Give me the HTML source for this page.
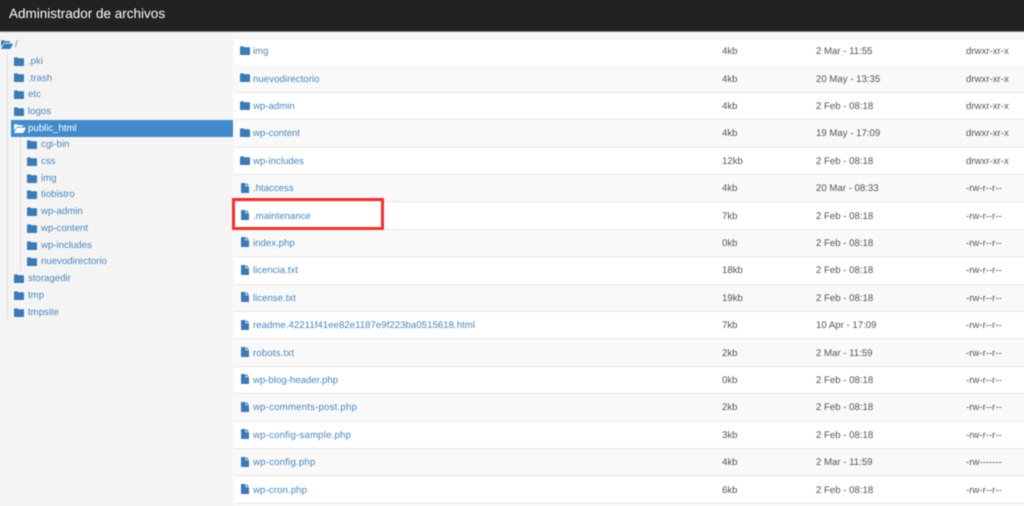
<!DOCTYPE html>
<html lang="es"><head><meta charset="utf-8"><title>Administrador de archivos</title>
<style>
html,body{margin:0;padding:0;width:1024px;height:506px;overflow:hidden;background:#f9f9f9}
#clip{position:relative;width:1024px;height:506px;overflow:hidden;contain:paint}
#w{position:absolute;left:-6px;top:-6px;width:1036px;height:518px;overflow:hidden;font-family:"Liberation Sans",sans-serif;filter:blur(.4px);text-rendering:geometricPrecision}
#in{position:absolute;left:6px;top:6px;width:1024px;height:506px}
#top{position:absolute;left:-6px;top:-6px;width:1036px;height:37px;background:#222;border-bottom:1px solid #777;color:#fff;font-size:13.5px;line-height:40px;text-indent:15px}
#side{position:absolute;left:-6px;top:32px;width:239px;height:480px;background:#f4f4f4}
.l{position:absolute;white-space:nowrap;font-size:9.65px;line-height:14px;color:#4a86bd;margin-top:.7px}
.k{position:absolute;white-space:nowrap;font-size:9.65px;line-height:14px;color:#555;margin-top:1.3px}
.l[style*="left:253px"]{margin-top:1.3px}
.r{position:absolute;left:234px;width:796px;height:26.4px;border-bottom:1px solid #e8e8e8}
svg.i{position:absolute;fill:#3a7ab5}
svg.i[style*="left:240px"]{margin-top:-.7px}
.v{position:absolute;width:1px;background:#ddd}
</style></head><body><div id="clip"><div id="w"><div id="in">
<svg width="0" height="0" style="position:absolute"><defs>
<symbol id="f" viewBox="0 0 10 9"><path d="M0 1.2Q0 .4 .8 .4H3.4L4.2 1.2H9.2Q10 1.2 10 2V8.2Q10 9 9.2 9H.8Q0 9 0 8.2Z"/></symbol>
<symbol id="o" viewBox="0 0 12 9"><path d="M0 1Q0 .3 .7 .3H3.2L4 1.1H8.2Q9 1.1 9 1.8V2.8H3L0 6.5Z"/><path d="M3.4 3.6H11.6Q12 3.6 11.8 4.1L9.5 8.5Q9.3 9 8.7 9H.6Q0 9 .3 8.4L2.6 4.1Q2.9 3.6 3.4 3.6Z"/></symbol>
<symbol id="d" viewBox="0 0 8 10"><path d="M0 .6Q0 0 .6 0H4.4V3.2H8V9.4Q8 10 7.4 10H.6Q0 10 0 9.4Z"/><path d="M5.2 0L8 2.5H5.2Z"/></symbol>
</defs></svg>

<div id="top">Administrador de archivos</div>
<div id="side"></div>
<div style="position:absolute;left:11px;top:120px;width:222px;height:16.5px;background:#428bca"></div>
<div class="v" style="left:7px;top:52px;height:268px"></div>
<div class="v" style="left:20px;top:137px;height:133px"></div>

<svg class="i" style="left:1px;top:39.500px" width="12" height="9"><use href="#o"/></svg><div class="l" style="left:15px;top:37px">/</div>
<svg class="i" style="left:14px;top:56.500px" width="10" height="9"><use href="#f"/></svg><div class="l" style="left:28px;top:54.500px">.pki</div>
<svg class="i" style="left:14px;top:73px" width="10" height="9"><use href="#f"/></svg><div class="l" style="left:28px;top:71px">.trash</div>
<svg class="i" style="left:14px;top:90px" width="10" height="9"><use href="#f"/></svg><div class="l" style="left:28px;top:87.500px">etc</div>
<svg class="i" style="left:14px;top:106.500px" width="10" height="9"><use href="#f"/></svg><div class="l" style="left:28px;top:104px">logos</div>
<svg class="i" style="left:14px;top:123.500px;fill:#fff" width="12" height="9"><use href="#o"/></svg><div class="l" style="left:28px;top:121px;color:#fff">public_html</div>
<svg class="i" style="left:27px;top:140px" width="10" height="9"><use href="#f"/></svg><div class="l" style="left:41px;top:137.500px">cgi-bin</div>
<svg class="i" style="left:27px;top:156.500px" width="10" height="9"><use href="#f"/></svg><div class="l" style="left:41px;top:154px">css</div>
<svg class="i" style="left:27px;top:173.500px" width="10" height="9"><use href="#f"/></svg><div class="l" style="left:41px;top:171px">img</div>
<svg class="i" style="left:27px;top:190px" width="10" height="9"><use href="#f"/></svg><div class="l" style="left:41px;top:187.500px">tiobistro</div>
<svg class="i" style="left:27px;top:207px" width="10" height="9"><use href="#f"/></svg><div class="l" style="left:41px;top:204.500px">wp-admin</div>
<svg class="i" style="left:27px;top:224px" width="10" height="9"><use href="#f"/></svg><div class="l" style="left:41px;top:221px">wp-content</div>
<svg class="i" style="left:27px;top:240.500px" width="10" height="9"><use href="#f"/></svg><div class="l" style="left:41px;top:238px">wp-includes</div>
<svg class="i" style="left:27px;top:257px" width="10" height="9"><use href="#f"/></svg><div class="l" style="left:41px;top:254.500px">nuevodirectorio</div>
<svg class="i" style="left:14px;top:274px" width="10" height="9"><use href="#f"/></svg><div class="l" style="left:28px;top:271.500px">storagedir</div>
<svg class="i" style="left:14px;top:290.500px" width="10" height="9"><use href="#f"/></svg><div class="l" style="left:28px;top:288px">tmp</div>
<svg class="i" style="left:14px;top:307.500px" width="10" height="9"><use href="#f"/></svg><div class="l" style="left:28px;top:305px">tmpsite</div>

<div style="position:absolute;left:233px;top:32px;width:797px;height:6px;background:#f9f9f9"></div>
<div class="r" style="top:38px;background:#fff;border-top:1px solid #eee"></div>
<div class="r" style="top:65.400px;background:#f9f9f9"></div>
<div class="r" style="top:92.800px;background:#fff"></div>
<div class="r" style="top:120.200px;background:#f9f9f9"></div>
<div class="r" style="top:147.600px;background:#fff"></div>
<div class="r" style="top:175px;background:#f9f9f9"></div>
<div class="r" style="top:202.500px;background:#fff"></div>
<div class="r" style="top:229.900px;background:#f9f9f9"></div>
<div class="r" style="top:257.300px;background:#fff"></div>
<div class="r" style="top:284.700px;background:#f9f9f9"></div>
<div class="r" style="top:312.100px;background:#fff"></div>
<div class="r" style="top:339.500px;background:#f9f9f9"></div>
<div class="r" style="top:366.900px;background:#fff"></div>
<div class="r" style="top:394.300px;background:#f9f9f9"></div>
<div class="r" style="top:421.700px;background:#fff"></div>
<div class="r" style="top:449.100px;background:#f9f9f9"></div>
<div class="r" style="top:476.500px;background:#fff"></div>
<div style="position:absolute;left:233px;top:504px;width:797px;height:8px;background:#f9f9f9"></div>

<svg class="i" style="left:240px;top:46.500px" width="10" height="9"><use href="#f"/></svg><div class="l" style="left:253px;top:44px">img</div><div class="k" style="left:722px;top:44px">4kb</div><div class="k" style="left:816px;top:44px">2 Mar - 11:55</div><div class="k" style="left:966px;top:44px">drwxr-xr-x</div>
<svg class="i" style="left:240px;top:74px" width="10" height="9"><use href="#f"/></svg><div class="l" style="left:253px;top:71.400px;letter-spacing:.05px">nuevodirectorio</div><div class="k" style="left:722px;top:71.400px">4kb</div><div class="k" style="left:816px;top:71.400px">20 May - 13:35</div><div class="k" style="left:966px;top:71.400px">drwxr-xr-x</div>
<svg class="i" style="left:240px;top:101.400px" width="10" height="9"><use href="#f"/></svg><div class="l" style="left:253px;top:98.800px">wp-admin</div><div class="k" style="left:722px;top:98.800px">4kb</div><div class="k" style="left:816px;top:98.800px">2 Feb - 08:18</div><div class="k" style="left:966px;top:98.800px">drwxr-xr-x</div>
<svg class="i" style="left:240px;top:128.800px" width="10" height="9"><use href="#f"/></svg><div class="l" style="left:253px;top:126.200px">wp-content</div><div class="k" style="left:722px;top:126.200px">4kb</div><div class="k" style="left:816px;top:126.200px">19 May - 17:09</div><div class="k" style="left:966px;top:126.200px">drwxr-xr-x</div>
<svg class="i" style="left:240px;top:156.200px" width="10" height="9"><use href="#f"/></svg><div class="l" style="left:253px;top:153.600px">wp-includes</div><div class="k" style="left:722px;top:153.600px">12kb</div><div class="k" style="left:816px;top:153.600px">2 Feb - 08:18</div><div class="k" style="left:966px;top:153.600px">drwxr-xr-x</div>
<svg class="i" style="left:241px;top:182.500px" width="8" height="10"><use href="#d"/></svg><div class="l" style="left:253px;top:181px">.htaccess</div><div class="k" style="left:722px;top:181px">4kb</div><div class="k" style="left:816px;top:181px">20 Mar - 08:33</div><div class="k" style="left:966px;top:181px">-rw-r--r--</div>
<svg class="i" style="left:241px;top:209.900px" width="8" height="10"><use href="#d"/></svg><div class="l" style="left:253px;top:208.400px">.maintenance</div><div class="k" style="left:722px;top:208.400px">7kb</div><div class="k" style="left:816px;top:208.400px">2 Feb - 08:18</div><div class="k" style="left:966px;top:208.400px">-rw-r--r--</div>
<svg class="i" style="left:241px;top:237.300px" width="8" height="10"><use href="#d"/></svg><div class="l" style="left:253px;top:235.800px">index.php</div><div class="k" style="left:722px;top:235.800px">0kb</div><div class="k" style="left:816px;top:235.800px">2 Feb - 08:18</div><div class="k" style="left:966px;top:235.800px">-rw-r--r--</div>
<svg class="i" style="left:241px;top:264.700px" width="8" height="10"><use href="#d"/></svg><div class="l" style="left:253px;top:263.200px">licencia.txt</div><div class="k" style="left:722px;top:263.200px">18kb</div><div class="k" style="left:816px;top:263.200px">2 Feb - 08:18</div><div class="k" style="left:966px;top:263.200px">-rw-r--r--</div>
<svg class="i" style="left:241px;top:292.100px" width="8" height="10"><use href="#d"/></svg><div class="l" style="left:253px;top:290.600px">license.txt</div><div class="k" style="left:722px;top:290.600px">19kb</div><div class="k" style="left:816px;top:290.600px">2 Feb - 08:18</div><div class="k" style="left:966px;top:290.600px">-rw-r--r--</div>
<svg class="i" style="left:241px;top:319.500px" width="8" height="10"><use href="#d"/></svg><div class="l" style="left:253px;top:318px;letter-spacing:.03px">readme.42211f41ee82e1187e9f223ba0515618.html</div><div class="k" style="left:722px;top:318px">7kb</div><div class="k" style="left:816px;top:318px">10 Apr - 17:09</div><div class="k" style="left:966px;top:318px">-rw-r--r--</div>
<svg class="i" style="left:241px;top:346.900px" width="8" height="10"><use href="#d"/></svg><div class="l" style="left:253px;top:345.400px;letter-spacing:.15px">robots.txt</div><div class="k" style="left:722px;top:345.400px">2kb</div><div class="k" style="left:816px;top:345.400px">2 Mar - 11:59</div><div class="k" style="left:966px;top:345.400px">-rw-r--r--</div>
<svg class="i" style="left:241px;top:374.300px" width="8" height="10"><use href="#d"/></svg><div class="l" style="left:253px;top:372.800px">wp-blog-header.php</div><div class="k" style="left:722px;top:372.800px">0kb</div><div class="k" style="left:816px;top:372.800px">2 Feb - 08:18</div><div class="k" style="left:966px;top:372.800px">-rw-r--r--</div>
<svg class="i" style="left:241px;top:401.700px" width="8" height="10"><use href="#d"/></svg><div class="l" style="left:253px;top:400.200px;letter-spacing:.2px">wp-comments-post.php</div><div class="k" style="left:722px;top:400.200px">2kb</div><div class="k" style="left:816px;top:400.200px">2 Feb - 08:18</div><div class="k" style="left:966px;top:400.200px">-rw-r--r--</div>
<svg class="i" style="left:241px;top:429.100px" width="8" height="10"><use href="#d"/></svg><div class="l" style="left:253px;top:427.600px;letter-spacing:.2px">wp-config-sample.php</div><div class="k" style="left:722px;top:427.600px">3kb</div><div class="k" style="left:816px;top:427.600px">2 Feb - 08:18</div><div class="k" style="left:966px;top:427.600px">-rw-r--r--</div>
<svg class="i" style="left:241px;top:456.500px" width="8" height="10"><use href="#d"/></svg><div class="l" style="left:253px;top:455px;letter-spacing:.2px">wp-config.php</div><div class="k" style="left:722px;top:455px">4kb</div><div class="k" style="left:816px;top:455px">2 Mar - 11:59</div><div class="k" style="left:966px;top:455px">-rw-------</div>
<svg class="i" style="left:241px;top:483.900px" width="8" height="10"><use href="#d"/></svg><div class="l" style="left:253px;top:482.400px;letter-spacing:.1px">wp-cron.php</div><div class="k" style="left:722px;top:482.400px">6kb</div><div class="k" style="left:816px;top:482.400px">2 Feb - 08:18</div><div class="k" style="left:966px;top:482.400px">-rw-r--r--</div>

<div style="position:absolute;left:232.300px;top:198.200px;width:145.400px;height:26px;border:3px solid #f23030"></div>
</div></div></div></body></html>
